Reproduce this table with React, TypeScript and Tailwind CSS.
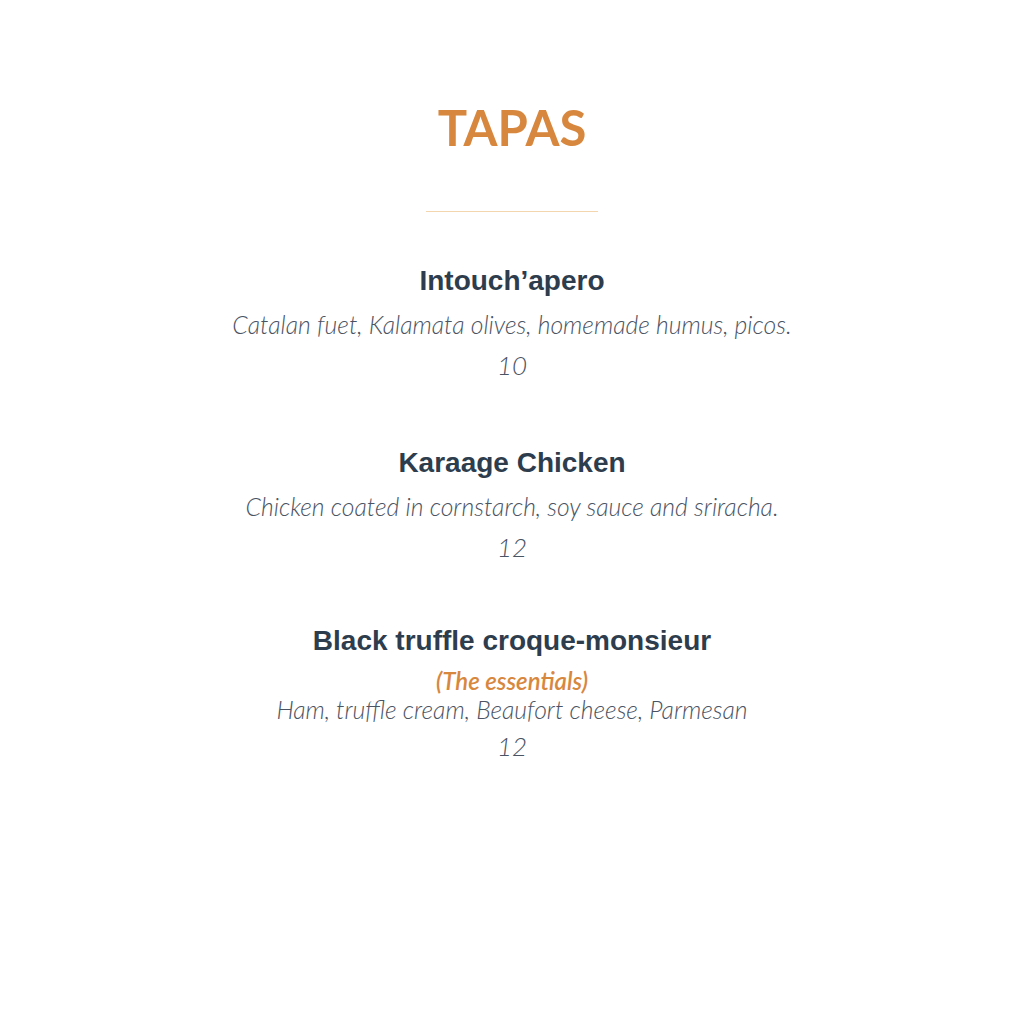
import React from "react";

const items = [
  { name: "Intouch’apero", desc: "Catalan fuet, Kalamata olives, homemade humus, picos.", price: "10", gap: "mt-0" },
  { name: "Karaage Chicken", desc: "Chicken coated in cornstarch, soy sauce and sriracha.", price: "12", gap: "mt-[62px]" },
  { name: "Black truffle croque-monsieur", note: "(The essentials)", desc: "Ham, truffle cream, Beaufort cheese, Parmesan", price: "12", gap: "mt-[58px]" },
];

export default function App() {
  return (
    <div className="w-[1024px] h-[1024px] bg-white flex flex-col items-center pt-[97px]">
      <h1 className="text-[#d8873e] text-[49px] leading-[60px] font-bold font-['Lato',sans-serif]">TAPAS</h1>
      <div className="mt-[54px] w-[172px] h-px bg-[#f3d6ad]" />
      <div className="mt-[53px] flex flex-col items-center">
        {items.map((it) => (
          <div key={it.name} className={`flex flex-col items-center ${it.gap}`}>
            <h2 className="text-[#2e3d4d] text-[28px] leading-[32px] font-bold font-['Liberation_Sans',Arial,sans-serif]">{it.name}</h2>
            {it.note ? (
              <>
                <div className="mt-[9px] text-[#d8873e] text-[24px] leading-[29px] italic font-semibold font-['Lato',sans-serif]">{it.note}</div>
                <div className="text-[#4a5463] text-[24.7px] leading-[30px] italic font-light font-['Lato',sans-serif]">{it.desc}</div>
                <div className="mt-[1px] text-[#4a5463] text-[26px] leading-[40px] italic font-light font-['Lato',sans-serif]">{it.price}</div>
              </>
            ) : (
              <>
                <div className="mt-[8px] text-[#4a5463] text-[24.7px] leading-[40px] italic font-light font-['Lato',sans-serif]">{it.desc}</div>
                <div className="text-[#4a5463] text-[26px] leading-[40px] italic font-light font-['Lato',sans-serif]">{it.price}</div>
              </>
            )}
          </div>
        ))}
      </div>
    </div>
  );
}
